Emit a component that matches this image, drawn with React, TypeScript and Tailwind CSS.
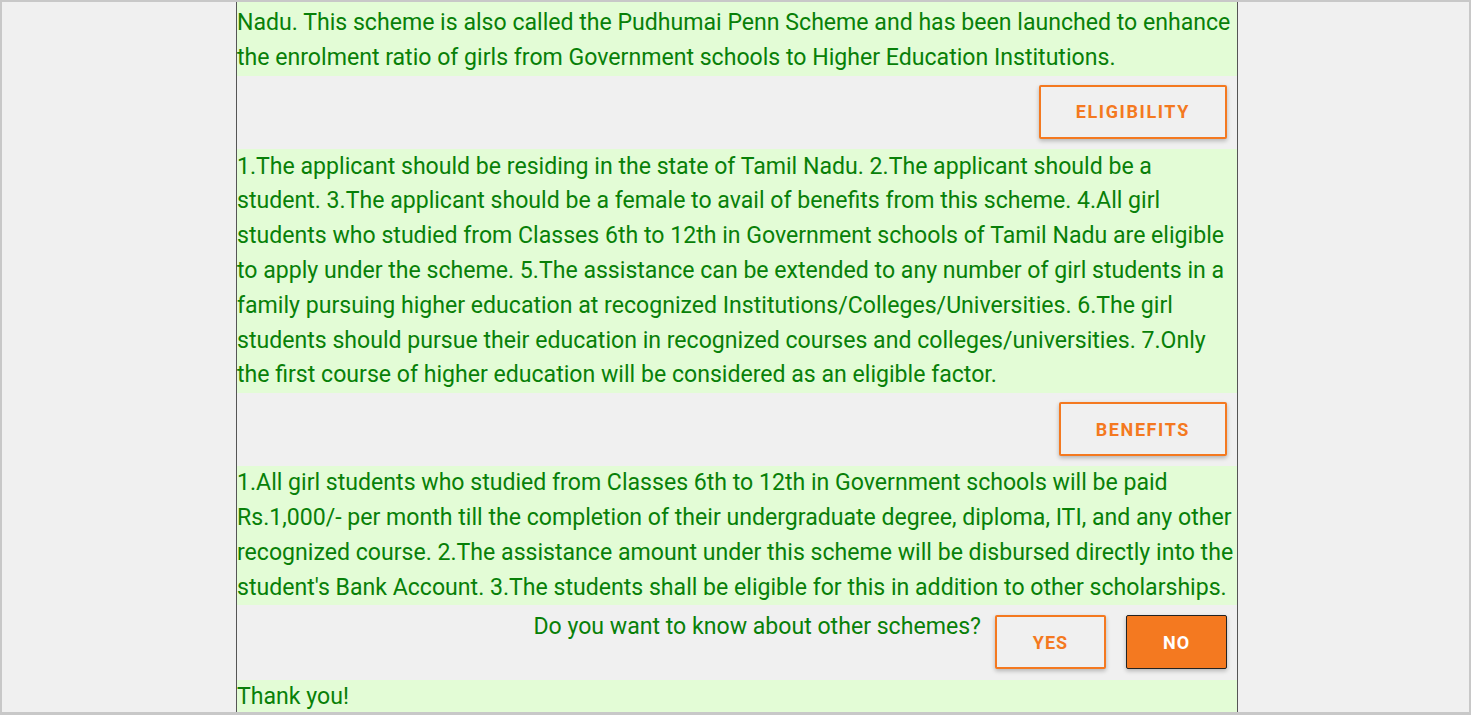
import React from "react";

const block =
  "bg-[#e3fcd6] text-[#088008] text-[23.1px] leading-[34.8px] font-['Roboto',sans-serif]";

function OutlineButton({ label, px }: { label: string; px: string }) {
  return (
    <button
      className={`h-[54px] ${px} border-2 border-[#f47920] bg-[#f0f0f0] rounded-[2px] shadow-[0_2px_4px_rgba(0,0,0,0.25)] text-[#f47920] font-bold text-[18px] tracking-[1.6px] font-['Roboto',sans-serif]`}
    >
      {label}
    </button>
  );
}

export default function App() {
  return (
    <div className="w-[1471px] h-[715px] overflow-hidden border-2 border-b-[3px] border-[#c8c8c8] bg-[#f0f0f0]">
      <div className="ml-[234px] w-[1002px] h-full border-x border-[#555] flex flex-col">
        <div className={`${block} pt-[4px]`}>
          <p>
            Nadu. This scheme is also called the Pudhumai Penn Scheme and has been launched to enhance
            the enrolment ratio of girls from Government schools to Higher Education Institutions.
          </p>
        </div>
        <div className="flex justify-end pr-[10px] pt-[9px] pb-[10px]">
          <OutlineButton label="ELIGIBILITY" px="px-[35px]" />
        </div>
        <div className={`${block} pt-[1px]`}>
          <p>
            1.The applicant should be residing in the state of Tamil Nadu. 2.The applicant should be a
            student. 3.The applicant should be a female to avail of benefits from this scheme. 4.All girl
            students who studied from Classes 6th to 12th in Government schools of Tamil Nadu are eligible
            to apply under the scheme. 5.The assistance can be extended to any number of girl students in a
            family pursuing higher education at recognized Institutions/Colleges/Universities. 6.The girl
            students should pursue their education in recognized courses and colleges/universities. 7.Only
            the first course of higher education will be considered as an eligible factor.
          </p>
        </div>
        <div className="flex justify-end pr-[10px] pt-[9px] pb-[10px]">
          <OutlineButton label="BENEFITS" px="px-[35px]" />
        </div>
        <div className={block}>
          <p>
            1.All girl students who studied from Classes 6th to 12th in Government schools will be paid
            Rs.1,000/- per month till the completion of their undergraduate degree, diploma, ITI, and any other
            recognized course. 2.The assistance amount under this scheme will be disbursed directly into the
            student's Bank Account. 3.The students shall be eligible for this in addition to other scholarships.
          </p>
        </div>
        <div className="flex justify-end items-start pr-[10px] pt-[10px] pb-[11px]">
          <span className="text-[#088008] text-[23.1px] leading-[24px] font-['Roboto',sans-serif] mr-[14px]">
            Do you want to know about other schemes?
          </span>
          <button className="h-[54px] w-[111px] border-2 border-[#f47920] bg-[#f0f0f0] rounded-[2px] shadow-[0_2px_4px_rgba(0,0,0,0.25)] text-[#f47920] font-bold text-[18px] tracking-[1px] font-['Roboto',sans-serif]">
            YES
          </button>
          <button className="ml-[20px] h-[54px] w-[101px] border border-[#222] bg-[#f47920] rounded-[2px] shadow-[0_2px_4px_rgba(0,0,0,0.25)] text-white font-bold text-[18px] tracking-[1px] font-['Roboto',sans-serif]">
            NO
          </button>
        </div>
        <div className={`${block} flex-1`}>
          <p>Thank you!</p>
        </div>
      </div>
    </div>
  );
}
